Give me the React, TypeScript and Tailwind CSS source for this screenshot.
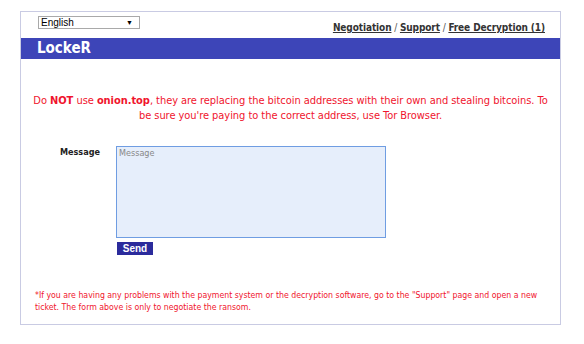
import React from "react";

export default function App() {
  const tahoma = { fontFamily: '"DejaVu Sans Condensed", "DejaVu Sans", sans-serif' };
  return (
    <div className="w-[584px] h-[344px] bg-white pl-[20px] pt-[11px]" style={tahoma}>
      <div className="w-[541px] h-[314px] border border-[#c9cbe3] flex flex-col">
        <div className="h-[26px] flex items-start justify-between pl-[17px] pr-[15px]">
          <div className="mt-[4px] w-[102px] h-[13px] border border-[#a9a9a9] bg-white flex items-center justify-between pl-[2px] pr-[6px] text-[10px] leading-none text-black" style={{ fontFamily: '"Liberation Sans", Arial, sans-serif' }}>
            <span>English</span>
            <span className="text-[7px]">▼</span>
          </div>
          <div className="mt-[11px] text-[10px] font-bold leading-none text-[#333] tracking-[-0.1px]">
            <span className="underline">Negotiation</span>
            <span className="font-normal text-[#555]"> / </span>
            <span className="underline">Support</span>
            <span className="font-normal text-[#555]"> / </span>
            <span className="underline">Free Decryption (1)</span>
          </div>
        </div>
        <div className="h-[21px] bg-[#3d45b8] flex items-center pl-[16px]">
          <span className="text-white font-bold text-[15px] leading-none">LockeR</span>
        </div>
        <div className="mt-[34px] px-[12px] text-center text-[11px] leading-[15px] text-[#f0142d] tracking-[-0.05px]">
          Do <b>NOT</b> use <b>onion.top</b>, they are replacing the bitcoin addresses with their own and stealing bitcoins. To be sure you're paying to the correct address, use Tor Browser.
        </div>
        <div className="mt-[23px] flex">
          <div className="w-[95px] pl-[39px] pt-[2px] text-[9px] font-bold text-[#222] leading-none">Message</div>
          <div className="flex flex-col">
            <div className="w-[270px] h-[92px] border border-[#6f9de2] bg-[#e6eefb] pl-[2px] pt-[2px] text-[9px] text-[#888] leading-none">Message</div>
            <div className="mt-[4px] ml-[1px] w-[36px] h-[13px] bg-[#2b2b9c] text-white text-[10px] font-bold leading-none flex items-center justify-center" style={{ fontFamily: '"Liberation Sans", Arial, sans-serif' }}>Send</div>
          </div>
        </div>
        <div className="mt-[34px] pl-[14px] pr-[4px] text-[8.7px] leading-[12px] text-[#f0142d]">
          *If you are having any problems with the payment system or the decryption software, go to the "Support" page and open a new ticket. The form above is only to negotiate the ransom.
        </div>
      </div>
    </div>
  );
}
